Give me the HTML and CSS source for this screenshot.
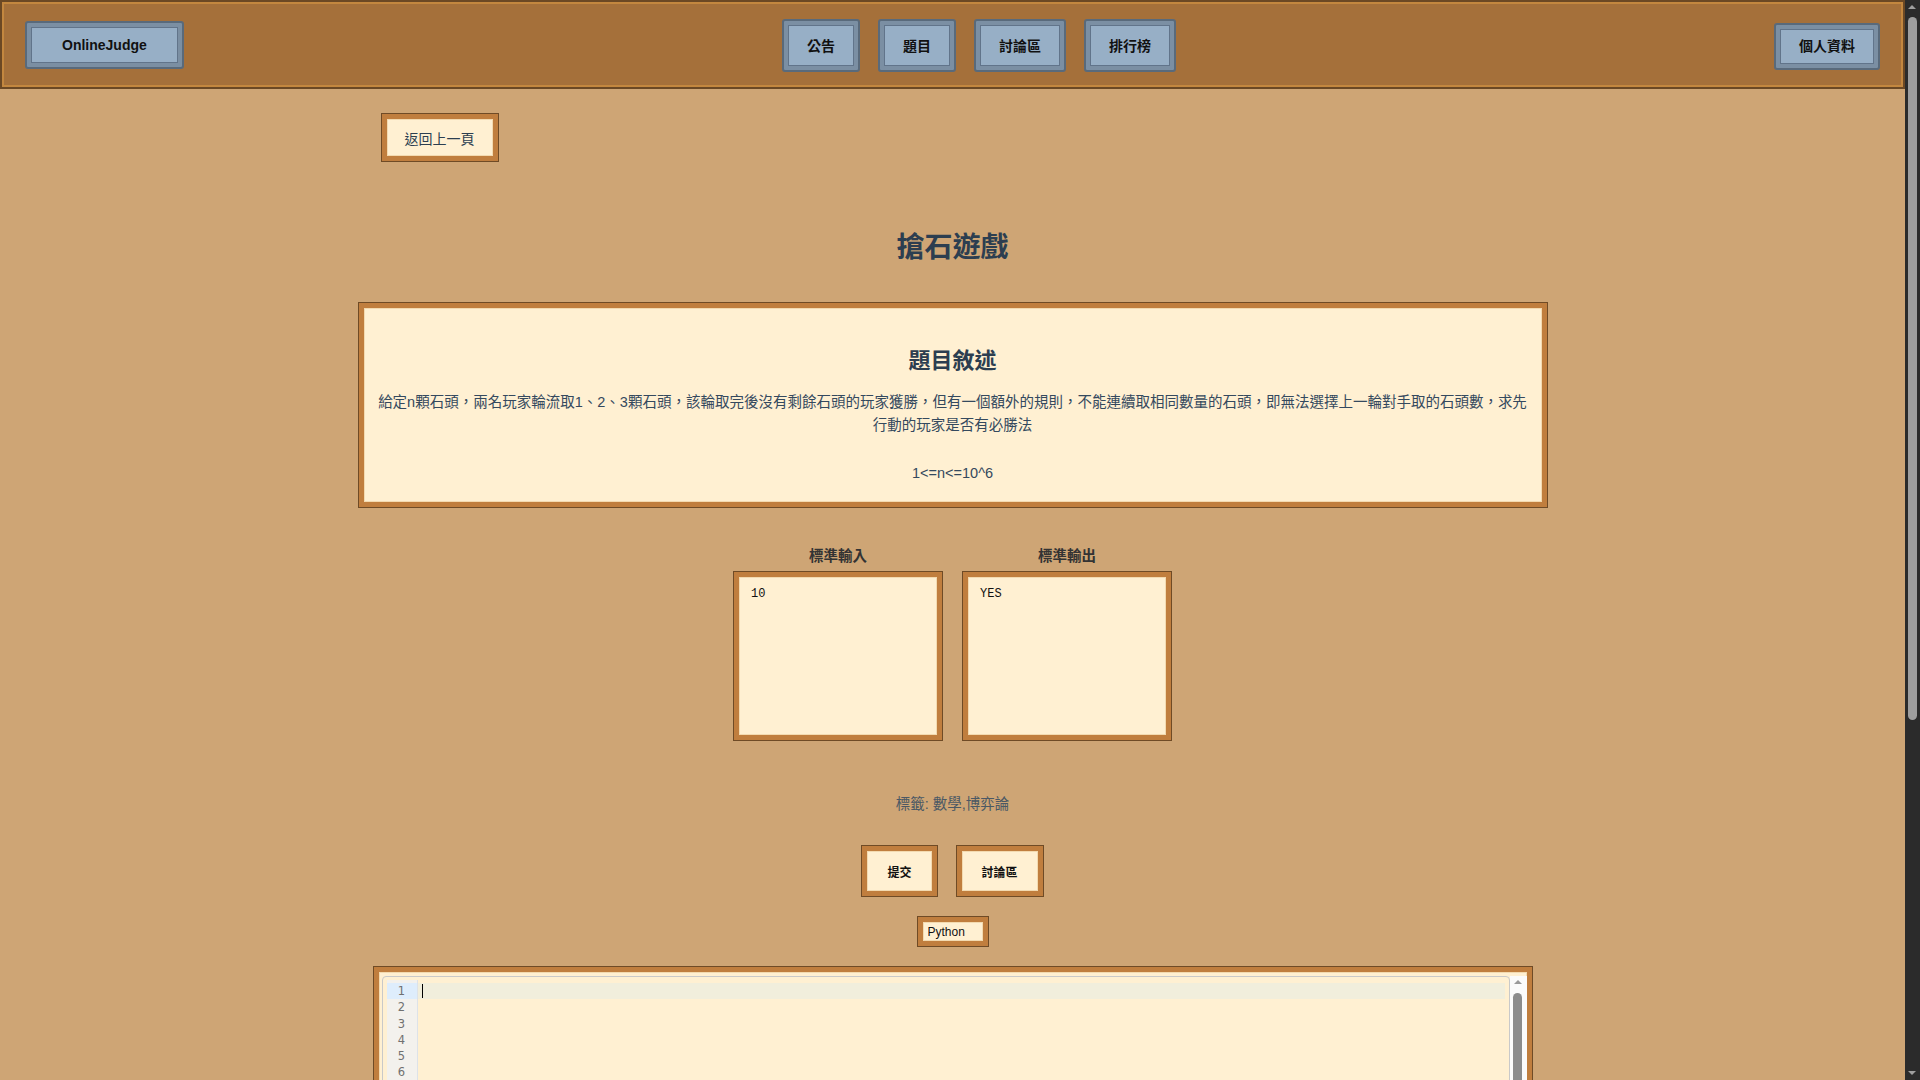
FILE: index.html
```html
<!DOCTYPE html>
<html lang="zh-Hant">
<head>
<meta charset="utf-8">
<title>搶石遊戲 - OnlineJudge</title>
<link rel="stylesheet" href="styles.css">
</head>
<body>
<header class="topbar">
  <a class="nav-btn logo" href="#">OnlineJudge</a>
  <nav class="nav-group">
    <a class="nav-btn nav-item" href="#">公告</a>
    <a class="nav-btn nav-item" href="#">題目</a>
    <a class="nav-btn nav-item" href="#">討論區</a>
    <a class="nav-btn nav-item" href="#">排行榜</a>
  </nav>
  <a class="nav-btn profile" href="#">個人資料</a>
</header>

<main class="page">
  <div class="back-row">
    <button class="wood-btn back-btn" type="button">返回上一頁</button>
  </div>

  <h1 class="problem-title">搶石遊戲</h1>

  <section class="wood-box desc">
    <h2 class="desc-title">題目敘述</h2>
    <p class="desc-text">給定n顆石頭，兩名玩家輪流取1、2、3顆石頭，該輪取完後沒有剩餘石頭的玩家獲勝，但有一個額外的規則，不能連續取相同數量的石頭，即無法選擇上一輪對手取的石頭數，求先行動的玩家是否有必勝法</p>
    <p class="desc-text desc-limit">1&lt;=n&lt;=10^6</p>
  </section>

  <div class="samples">
    <div class="sample">
      <h3 class="sample-label">標準輸入</h3>
      <pre class="wood-box sample-box">10</pre>
    </div>
    <div class="sample">
      <h3 class="sample-label">標準輸出</h3>
      <pre class="wood-box sample-box">YES</pre>
    </div>
  </div>

  <p class="tags">標籤: 數學,博弈論</p>

  <div class="actions">
    <button class="wood-btn action-btn" type="button">提交</button>
    <button class="wood-btn action-btn" type="button">討論區</button>
  </div>

  <div class="lang-row">
    <select class="lang-select">
      <option>Python</option>
    </select>
  </div>

  <div class="wood-box editor-wrap">
    <div class="editor">
      <div class="gutter">
        <div class="ln active">1</div><div class="ln">2</div><div class="ln">3</div><div class="ln">4</div><div class="ln">5</div><div class="ln">6</div>
      </div>
      <div class="code">
        <div class="code-line active"><span class="cursor"></span></div>
      </div>
    </div>
    <div class="vscroll">
      <span class="vs-arrow"></span>
      <span class="vs-thumb"></span>
    </div>
  </div>
</main>

<div class="page-scrollbar" aria-hidden="true">
  <span class="ps-up"></span>
  <span class="ps-thumb"></span>
  <span class="ps-down"></span>
</div>
</body>
</html>
```

FILE: styles.css
```css
body {
  margin: 0 15px 0 0;
  background: #cea575;
  color: #2c3e50;
  font-family: "Liberation Sans", "Noto Sans CJK TC", sans-serif;
}

/* ---------- header ---------- */
.topbar {
  box-sizing: border-box;
  height: 89px;
  display: flex;
  align-items: center;
  justify-content: space-between;
  padding: 0 23px;
  background: #a5703a;
  border: 2px solid #6b4824;
  box-shadow: inset 0 0 0 2px #c3873f;
}

.nav-group {
  display: flex;
  gap: 18px;
}

.nav-btn {
  display: block;
  box-sizing: border-box;
  background: #97afc6;
  border: 2px solid #596a7b;
  border-radius: 3px;
  box-shadow: inset 0 0 0 4px #7b8fa3, inset 0 0 0 5px #61748a;
  color: #111;
  font-weight: bold;
  font-size: 14px;
  text-decoration: none;
  text-align: center;
}

.logo {
  padding: 13px 35px;
  line-height: 18px;
}

.nav-item {
  padding: 16px 23px 14px;
  line-height: 19px;
  margin-top: 1px;
}

.profile {
  padding: 12px 23px;
  line-height: 19px;
  margin-top: 3px;
}

/* ---------- page ---------- */
.page {
  width: 1188px;
  margin: 0 auto;
  padding: 25px 0 75px;
}

.wood-box,
.wood-btn {
  box-sizing: border-box;
  background: #fff0d2;
  border: 5px solid #c07e3e;
  box-shadow: 0 0 0 1px #6f4b26, inset 0 0 0 1px #f3dab0;
}

.back-row {
  padding-left: 23px;
}

.wood-btn {
  font-family: "Liberation Sans", "Noto Sans CJK TC", sans-serif;
  cursor: pointer;
}

.back-btn {
  display: block;
  height: 47px;
  padding: 0 18px;
  font-size: 14px;
  color: #2c3e50;
}

.problem-title {
  margin: 70px 0 38px;
  text-align: center;
  font-size: 28px;
  line-height: 34px;
  font-weight: bold;
  color: #2c3e50;
}

.desc {
  padding: 39px 12px 17px;
  text-align: center;
}

.desc-title {
  margin: 0 0 16px;
  font-size: 22px;
  line-height: 28px;
  color: #2c3e50;
}

.desc-text {
  margin: 0;
  font-size: 14.5px;
  line-height: 23px;
  color: #34495e;
}

.desc-limit {
  margin-top: 25px;
}

/* ---------- samples ---------- */
.samples {
  display: flex;
  justify-content: center;
  gap: 21px;
  margin-top: 40px;
}

.sample {
  display: flex;
  flex-direction: column;
  align-items: center;
}

.sample-label {
  margin: 0 0 7px;
  font-size: 14.5px;
  line-height: 18px;
  color: #333;
}

.sample-box {
  width: 208px;
  height: 168px;
  margin: 0;
  padding: 10px 12px;
  font-family: "Liberation Mono", "DejaVu Sans Mono", monospace;
  font-size: 12px;
  line-height: 15px;
  color: #111;
}

/* ---------- tags & actions ---------- */
.tags {
  margin: 54px 0 0;
  text-align: center;
  font-size: 14.5px;
  line-height: 20px;
  color: #4b5864;
}

.actions {
  display: flex;
  justify-content: center;
  gap: 20px;
  margin-top: 32px;
}

.action-btn {
  height: 50px;
  padding: 0 20px;
  font-size: 12px;
  font-weight: bold;
  color: #111;
}

.lang-row {
  display: flex;
  justify-content: center;
  margin-top: 21px;
}

.lang-select {
  appearance: none;
  -webkit-appearance: none;
  box-sizing: border-box;
  width: 70px;
  height: 29px;
  padding: 0 5px;
  background: #fff0d2;
  border: 5px solid #c07e3e;
  border-radius: 0;
  box-shadow: 0 0 0 1px #6f4b26, inset 0 0 0 1px #f3dab0;
  font-family: "Liberation Sans", sans-serif;
  font-size: 12px;
  color: #111;
  outline: none;
}

/* ---------- editor ---------- */
.editor-wrap {
  display: flex;
  width: 1158px;
  height: 560px;
  margin: 21px auto 0;
  padding: 4px 0 0 3px;
}

.editor {
  flex: 1;
  display: flex;
  box-sizing: border-box;
  padding: 3px 4px 4px;
  background: #fff0d2;
  border: 1px solid #c9c9c9;
  border-radius: 4px 4px 0 0;
}

.gutter {
  width: 31px;
  box-sizing: border-box;
  padding-top: 3px;
  background: #f3f1ed;
  border-right: 1px solid #dde2e8;
}

.ln {
  height: 16.3px;
  line-height: 16.3px;
  text-align: center;
  font-family: "DejaVu Sans", sans-serif;
  font-size: 11.5px;
  color: #707070;
}

.ln.active {
  background: #deedfc;
}

.code {
  flex: 1;
  padding-top: 3px;
}

.code-line {
  height: 16.3px;
  padding-left: 4px;
  display: flex;
  align-items: center;
}

.code-line.active {
  background: #f1eedc;
}

.cursor {
  display: block;
  width: 1px;
  height: 14px;
  background: #000;
}

.vscroll {
  position: relative;
  width: 17px;
  background: #fbfbfb;
}

.vs-arrow {
  position: absolute;
  left: 4px;
  top: 4px;
  width: 0;
  height: 0;
  border-left: 4px solid transparent;
  border-right: 4px solid transparent;
  border-bottom: 4px solid #9a9a9a;
}

.vs-thumb {
  position: absolute;
  left: 3px;
  top: 17px;
  width: 9px;
  height: 420px;
  border-radius: 5px;
  background: #8c8c8c;
}

/* ---------- page scrollbar (drawn) ---------- */
.page-scrollbar {
  position: fixed;
  top: 0;
  right: 0;
  width: 15px;
  height: 100vh;
  background: #2b2b2b;
}

.ps-up,
.ps-down {
  position: absolute;
  left: 3px;
  width: 0;
  height: 0;
  border-left: 4.5px solid transparent;
  border-right: 4.5px solid transparent;
}

.ps-up {
  top: 5px;
  border-bottom: 4.5px solid #9e9e9e;
}

.ps-down {
  bottom: 5px;
  border-top: 4.5px solid #9e9e9e;
}

.ps-thumb {
  position: absolute;
  left: 3px;
  top: 17px;
  width: 9px;
  height: 703px;
  border-radius: 5px;
  background: #9e9e9e;
}
```
